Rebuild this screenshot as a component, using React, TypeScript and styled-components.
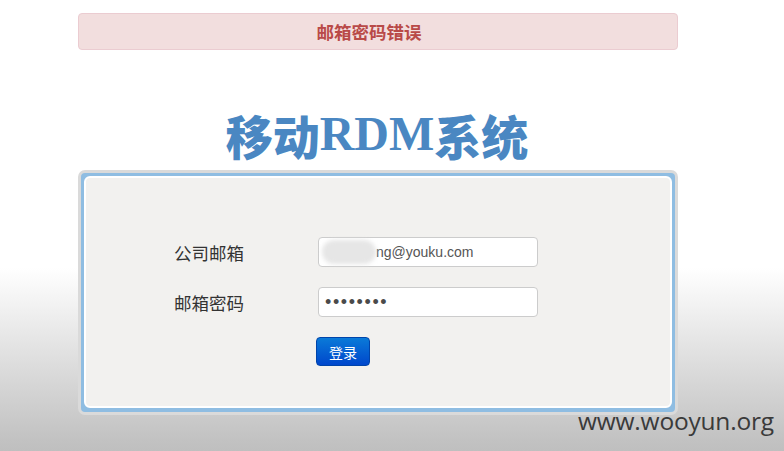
import React from "react";
import styled, { createGlobalStyle } from "styled-components";

const Global = createGlobalStyle`
  html, body { margin: 0; padding: 0; }
  body {
    min-height: 451px;
    background: linear-gradient(to bottom, #ffffff 0px, #ffffff 268px, #c2c2c2 440px, #bfbfbf 451px);
    font-family: "Liberation Sans", Arial, "Noto Sans CJK SC", sans-serif;
    overflow: hidden;
  }
`;

const Page = styled.div`
  position: relative;
  height: 451px;
  padding-top: 13px;
  box-sizing: border-box;
`;

const Container = styled.div`
  width: 600px;
  margin-left: 78px;
`;

const Alert = styled.div`
  height: 37px;
  box-sizing: border-box;
  border: 1px solid #ebccd1;
  background: #f2dede;
  border-radius: 4px;
  color: #b94a48;
  font-family: "Noto Sans CJK SC", sans-serif;
  font-weight: 700;
  font-size: 17.5px;
  display: flex;
  align-items: center;
  justify-content: center;
  padding-right: 18px;
`;

const Title = styled.h1`
  margin: 0;
  height: 120px;
  display: flex;
  align-items: flex-end;
  justify-content: center;
  padding-bottom: 12px;
  box-sizing: border-box;
  color: #4a87c2;
  font-size: 48px;
  font-weight: 700;
  line-height: 1;
  font-family: "Liberation Serif", "Noto Sans CJK SC", serif;
  padding-right: 2px;
`;

const Han = styled.span`
  font-family: "Noto Sans CJK SC", sans-serif;
  font-weight: 900;
  font-size: 47px;
`;

const PanelOuter = styled.div`
  border: 3px solid #dadada;
  border-radius: 7px;
  background: #8fbde2;
  padding: 3px;
  padding-bottom: 4px;
`;

const PanelInner = styled.div`
  border: 2px solid #ffffff;
  border-radius: 6px;
  background: #f2f1ef;
  padding: 59px 0 40px 86px;
  display: flex;
  flex-direction: column;
  gap: 20px;
`;

const Row = styled.div`
  display: flex;
  align-items: center;
`;

const Label = styled.label`
  width: 144px;
  font-size: 17.5px;
  color: #333;
  font-family: "Noto Sans CJK SC", sans-serif;
  padding-left: 2px;
`;

const Field = styled.div`
  position: relative;
`;

const Input = styled.input<{ $pad?: number }>`
  width: 220px;
  height: 30px;
  box-sizing: border-box;
  border: 1px solid #cccccc;
  border-radius: 4px;
  background: #fff;
  padding: 0 0 0 ${(p) => p.$pad ?? 7}px;
  font-size: 14px;
  color: #555;
  font-family: "Liberation Sans", Arial, sans-serif;
  outline: none;
`;

const Password = styled(Input)`
  font-size: 18px;
  letter-spacing: 1.6px;
  padding-left: 6px;
  color: #4a4a4a;
`;

const Blob = styled.div`
  position: absolute;
  left: 4px;
  top: 3px;
  width: 54px;
  height: 24px;
  border-radius: 12px;
  background: #e6e6e6;
  filter: blur(2px);
`;

const Button = styled.button`
  width: 54px;
  height: 29px;
  border: 1px solid #0044aa;
  border-radius: 4px;
  background: linear-gradient(to bottom, #0a7ad8, #0047cc);
  color: #fff;
  font-size: 14px;
  font-family: "Noto Sans CJK SC", sans-serif;
  padding: 0;
`;

const ButtonRow = styled.div`
  padding-left: 144px;
`;

const Watermark = styled.div`
  position: absolute;
  left: 578px;
  top: 404px;
  font-family: "Open Sans", "DejaVu Sans", sans-serif;
  font-size: 24.5px;
  color: #3a3a3a;
  letter-spacing: -0.2px;
`;

export default function App() {
  return (
    <>
      <Global />
      <Page>
        <Container>
          <Alert>邮箱密码错误</Alert>
          <Title>
            <Han>移动</Han>RDM<Han>系统</Han>
          </Title>
          <PanelOuter>
            <PanelInner>
              <Row>
                <Label>公司邮箱</Label>
                <Field>
                  <Input readOnly $pad={57} value="ng@youku.com" />
                  <Blob />
                </Field>
              </Row>
              <Row>
                <Label>邮箱密码</Label>
                <Password readOnly type="password" value="12345678" />
              </Row>
              <ButtonRow>
                <Button>登录</Button>
              </ButtonRow>
            </PanelInner>
          </PanelOuter>
        </Container>
        <Watermark>www.wooyun.org</Watermark>
      </Page>
    </>
  );
}
